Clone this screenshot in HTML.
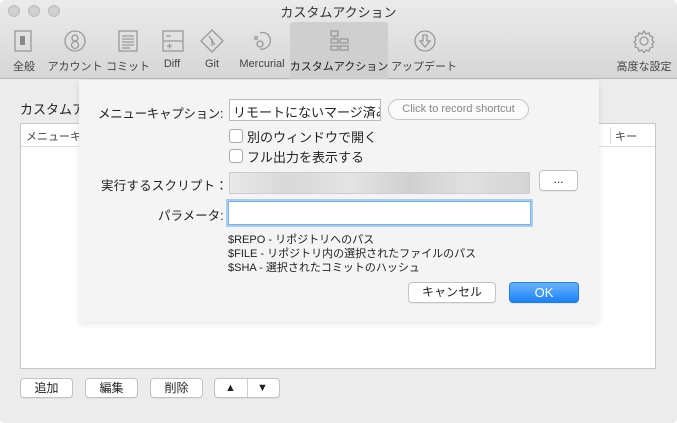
<!DOCTYPE html>
<html><head><meta charset="utf-8"><style>
*{margin:0;padding:0;box-sizing:border-box}
body{width:677px;height:423px;overflow:hidden;font-family:"Liberation Sans","Noto Sans CJK JP",sans-serif;font-size:12px;color:#222;background:#fff}
.win{position:absolute;left:0;top:0;width:677px;height:423px;background:#ececec;border-radius:5px;overflow:hidden}
.tb{position:absolute;left:0;top:0;width:677px;height:79px;background:linear-gradient(#ebebeb,#d6d6d6);border-bottom:1px solid #b8b8b8}
.title{position:absolute;top:2px;left:0;width:677px;text-align:center;font-size:13px;color:#333}
.dot{position:absolute;top:5px;width:12px;height:12px;border-radius:50%;background:#d0d0d0;border:1px solid #bdbdbd}
.sel{position:absolute;left:290px;top:22px;width:98px;height:57px;background:#cfcfcf;border-radius:3px 3px 0 0}
.lab{position:absolute;top:58px;font-size:11px;color:#444;white-space:nowrap;transform:translateX(-50%)}
.ic{position:absolute;top:29px}
.sheet{position:absolute;left:79px;top:80px;width:520px;height:242px;background:#f4f4f4;box-shadow:0 2px 6px rgba(0,0,0,.1)}
.table{position:absolute;left:20px;top:123px;width:636px;height:246px;background:#fff;border:1px solid #c6c6c6}
.btn{position:absolute;background:#fff;border:1px solid #c2c2c2;border-radius:4px;text-align:center;font-size:12px;box-shadow:0 1px 0 rgba(0,0,0,.05)}
.t{position:absolute;white-space:nowrap}
.cb{position:absolute;width:14px;height:14px;border:1px solid #aaa;border-radius:3px;background:#fff}
</style></head><body><div class="win">
<div class="tb">
<div class="dot" style="left:8px"></div><div class="dot" style="left:28px"></div><div class="dot" style="left:48px"></div>
<div class="title">カスタムアクション</div>
<div class="sel"></div>
<svg class="ic" style="left:13px" width="22" height="24" fill="none" stroke="#999" stroke-width="1.3"><rect x="2" y="2" width="16" height="20"/><rect x="7" y="7" width="5" height="9" fill="#888" stroke="none"/></svg>
<svg class="ic" style="left:63px" width="24" height="24" fill="none" stroke="#999" stroke-width="1.3"><circle cx="12" cy="12" r="10"/><circle cx="12" cy="9" r="3"/><circle cx="12" cy="16" r="3.5"/></svg>
<svg class="ic" style="left:117px" width="22" height="24" fill="none" stroke="#999" stroke-width="1.3"><rect x="2" y="2" width="18" height="20"/><path d="M5 7h12M5 10h12M5 13h12M5 16h12M5 19h8"/></svg>
<svg class="ic" style="left:162px" width="22" height="24" fill="none" stroke="#999" stroke-width="1.3"><rect x="1" y="2" width="20" height="20"/><path d="M1 12h20M4 7h5M5 17h5M7.5 14.5v5"/></svg>
<svg class="ic" style="left:200px" width="24" height="24" fill="none" stroke="#999" stroke-width="1.3"><path d="M12 1l11 11-11 11L1 12z"/><path d="M9 7l6 9M12 10v7"/></svg>
<svg class="ic" style="left:250px" width="24" height="24" fill="none" stroke="#999" stroke-width="1.3"><path d="M10 4c6-2 12 3 10 10-1 4-6 7-10 6"/><circle cx="10" cy="15" r="3"/><circle cx="6" cy="9" r="1.5"/></svg>
<svg class="ic" style="left:328px" width="22" height="24" fill="none" stroke="#999" stroke-width="1.3"><rect x="3" y="2" width="7" height="5"/><rect x="3" y="10" width="7" height="4"/><rect x="12" y="10" width="8" height="4"/><rect x="3" y="17" width="7" height="4"/><rect x="12" y="17" width="8" height="4"/><path d="M6.5 7v3"/></svg>
<svg class="ic" style="left:413px" width="24" height="24" fill="none" stroke="#999" stroke-width="1.3"><circle cx="12" cy="12" r="10"/><path d="M10 6h4v6h3l-5 6-5-6h3z"/></svg>
<svg class="ic" style="left:632px" width="24" height="24" fill="none" stroke="#999" stroke-width="1.3"><circle cx="12" cy="12" r="4"/><path d="M12 2l2 3 3-1 1 3 3 1-1 3 2 2-2 2 1 3-3 1-1 3-3-1-2 3-2-3-3 1-1-3-3-1 1-3-2-2 2-2-1-3 3-1 1-3 3 1z"/></svg>
<div class="lab" style="left:24px">全般</div>
<div class="lab" style="left:75px">アカウント</div>
<div class="lab" style="left:128px">コミット</div>
<div class="lab" style="left:172px">Diff</div>
<div class="lab" style="left:212px">Git</div>
<div class="lab" style="left:262px">Mercurial</div>
<div class="lab" style="left:339px;color:#222">カスタムアクション</div>
<div class="lab" style="left:424px">アップデート</div>
<div class="lab" style="left:644px">高度な設定</div>
</div>
<div class="t" style="left:20px;top:99px;font-size:13px">カスタムアクション</div>
<div class="table">
<div style="position:absolute;left:0;top:0;width:634px;height:23px;border-bottom:1px solid #ddd"></div>
<div class="t" style="left:5px;top:4px;font-size:11px;color:#444">メニューキャプション</div>
<div style="position:absolute;left:589px;top:3px;width:1px;height:17px;background:#ddd"></div>
<div class="t" style="left:594px;top:4px;font-size:11px;color:#444">キー</div>
</div>
<div class="sheet">
<div class="t" style="left:19px;top:23px;font-size:12.5px;letter-spacing:-0.3px">メニューキャプション:</div>
<div style="position:absolute;left:150px;top:19px;width:152px;height:22px;background:#fff;border:1px solid #bbb;overflow:hidden"><div class="t" style="left:3px;top:2px;font-size:13px">リモートにないマージ済み</div></div>
<div style="position:absolute;left:309px;top:19px;width:141px;height:21px;border:1px solid #c4c4c4;border-radius:11px;background:#fafafa;color:#888;font-size:11px;text-align:center;line-height:19px">Click to record shortcut</div>
<div class="cb" style="left:150px;top:49px"></div><div class="t" style="left:168px;top:47px;font-size:13px">別のウィンドウで開く</div>
<div class="cb" style="left:150px;top:69px"></div><div class="t" style="left:168px;top:67px;font-size:13px">フル出力を表示する</div>
<div class="t" style="left:22px;top:95px;font-size:12.5px;letter-spacing:0.2px">実行するスクリプト：</div>
<div style="position:absolute;left:150px;top:92px;width:301px;height:22px;border:1px solid #ccc;background:linear-gradient(90deg,#e8e8e8,#d8d8d8 20%,#e4e4e4 40%,#d0d0d0 60%,#e0e0e0 80%,#d4d4d4)"></div>
<div class="btn" style="left:460px;top:90px;width:39px;height:21px;line-height:17px">...</div>
<div class="t" style="left:79px;top:125px;font-size:12.5px">パラメータ:</div>
<div style="position:absolute;left:149px;top:121px;width:303px;height:24px;background:#fff;border:1px solid #7ab1e8;box-shadow:0 0 0 2px #a8cdf3"></div>
<div class="t" style="left:149px;top:153px;font-size:11px;line-height:14px">$REPO - リポジトリへのパス<br>$FILE - リポジトリ内の選択されたファイルのパス<br>$SHA - 選択されたコミットのハッシュ</div>
<div class="btn" style="left:329px;top:202px;width:88px;height:21px;line-height:19px">キャンセル</div>
<div class="btn" style="left:430px;top:202px;width:70px;height:21px;line-height:19px;background:linear-gradient(#6cb3fa,#1a82fb);border-color:#1f7ff0;color:#fff;font-size:13px">OK</div>
</div>
<div class="btn" style="left:20px;top:378px;width:53px;height:20px;line-height:18px">追加</div>
<div class="btn" style="left:85px;top:378px;width:53px;height:20px;line-height:18px">編集</div>
<div class="btn" style="left:150px;top:378px;width:53px;height:20px;line-height:18px">削除</div>
<div class="btn" style="left:214px;top:378px;width:66px;height:20px;line-height:18px"><span style="position:absolute;left:10px;font-size:11px">▲</span><span style="position:absolute;left:32px;top:0;width:1px;height:18px;background:#ccc"></span><span style="position:absolute;left:42px;font-size:11px">▼</span></div>
</div></body></html>
